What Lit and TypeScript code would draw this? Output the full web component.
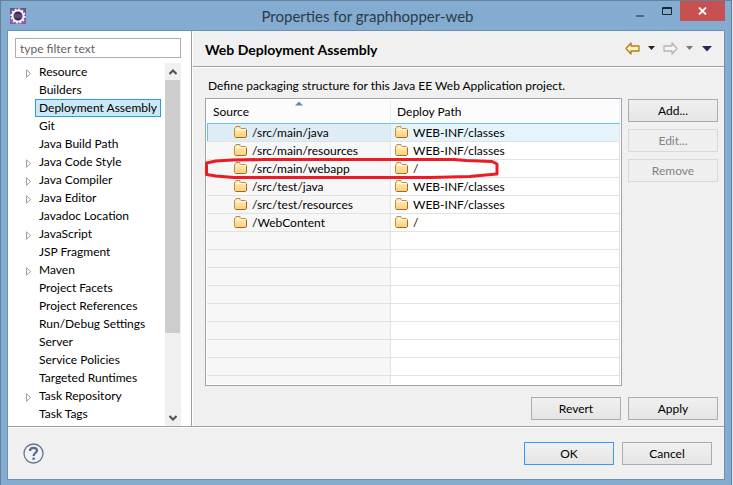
import { LitElement, html, css, nothing } from "lit";
import { customElement, state } from "lit/decorators.js";
import { classMap } from "lit/directives/class-map.js";

interface Page {
  name: string;
  expandable?: boolean;
}

interface Mapping {
  source: string;
  path: string;
}

const PAGES: Page[] = [
  { name: "Resource", expandable: true },
  { name: "Builders" },
  { name: "Deployment Assembly" },
  { name: "Git" },
  { name: "Java Build Path" },
  { name: "Java Code Style", expandable: true },
  { name: "Java Compiler", expandable: true },
  { name: "Java Editor", expandable: true },
  { name: "Javadoc Location" },
  { name: "JavaScript", expandable: true },
  { name: "JSP Fragment" },
  { name: "Maven", expandable: true },
  { name: "Project Facets" },
  { name: "Project References" },
  { name: "Run/Debug Settings" },
  { name: "Server" },
  { name: "Service Policies" },
  { name: "Targeted Runtimes" },
  { name: "Task Repository", expandable: true },
  { name: "Task Tags" },
];

const MAPPINGS: Mapping[] = [
  { source: "/src/main/java", path: "WEB-INF/classes" },
  { source: "/src/main/resources", path: "WEB-INF/classes" },
  { source: "/src/main/webapp", path: "/" },
  { source: "/src/test/java", path: "WEB-INF/classes" },
  { source: "/src/test/resources", path: "WEB-INF/classes" },
  { source: "/WebContent", path: "/" },
];

const EMPTY_ROWS = 9;

const folderIcon = html`<svg class="folder" width="14" height="12" viewBox="0 0 14 12" aria-hidden="true">
  <defs>
    <linearGradient id="f" x1="0" y1="0" x2="0" y2="1">
      <stop offset="0" stop-color="#fff3cd" />
      <stop offset="1" stop-color="#fbcf73" />
    </linearGradient>
  </defs>
  <path d="M.5 10V2.500L2 1.500V.5H6V1.500L7 2.500H11.500L12.500 3.500V10.500L11.500 11.500H1.500L.5 10.500Z" fill="url(#f)" stroke="#c68a3c" />
  <path d="M1.500 3.500H11.500" stroke="#fffbe9" />
  <path d="M1.500 11.500H11.500L12.500 10.500V4" fill="none" stroke="#a8691f" />
</svg>`;

const eclipseIcon = html`<svg width="16" height="16" viewBox="0 0 16 16" aria-hidden="true">
  <rect width="16" height="16" fill="#69508f" />
  <rect y="11" width="16" height="5" fill="#8b5da0" />
  <circle cx="8" cy="8" r="6.700" fill="none" stroke="#eeeaf0" stroke-width="2" stroke-dasharray="2 1.500" />
  <circle cx="8" cy="8" r="5.500" fill="#352a58" stroke="#f4f2f4" stroke-width="2" />
  <path d="M4 7H12M4 9H12" stroke="#7d6a9e" />
</svg>`;

const caret = (color: string) => html`<svg width="9" height="5" viewBox="0 0 9 5" aria-hidden="true">
  <path d="M1 0H8L4.500 4Z" fill=${color} />
</svg>`;

const arrow = (line: string, fill: string, forward = false) => html`<svg width="15" height="13" viewBox="0 0 15 13" aria-hidden="true">
  <path
    d=${forward
      ? "M14 6.500L9 1V4H1V9H9V12Z"
      : "M1 6.500L6 1V4H14V9H6V12Z"}
    fill=${fill} stroke=${line} stroke-width="1.300" stroke-linejoin="round" />
</svg>`;

@customElement("app-root")
export class AppRoot extends LitElement {
  @state() private selected = "Deployment Assembly";

  static styles = css`
    :host {
      display: block;
      box-sizing: border-box;
      min-height: 100vh;
      padding-right: 1px;
      background: #e4e4e6;
      font: 12px/18px Lato, "Open Sans", sans-serif;
      color: #000;
    }
    * { box-sizing: border-box; }
    button, input { font: inherit; color: inherit; margin: 0; }
    button { padding: 0; }
    svg { display: block; flex: none; }

    .window {
      display: flex;
      flex-direction: column;
      min-height: 100vh;
      padding: 0 6px 5px;
      background: #84acd0;
      border: 1px solid #638199;
      border-bottom: 0;
    }
    .titlebar {
      display: grid;
      grid-template-columns: 1fr auto 1fr;
      height: 29px;
      padding-left: 3px;
    }
    .app-icon { align-self: center; }
    .title {
      margin: 0;
      align-self: center;
      font-size: 15px;
      font-weight: 400;
      line-height: 20px;
      color: #2b3a48;
    }
    .controls { display: flex; justify-content: flex-end; align-items: flex-start; }
    .control {
      display: grid;
      place-items: center;
      width: 27px;
      height: 20px;
      border: 0;
      background: none;
    }
    .close { width: 45px; background: #c75050; }

    .client {
      flex: 1;
      display: flex;
      flex-direction: column;
      background: #f0f0f0;
      border: 1px solid #6b90b3;
    }
    .main { flex: 1; display: flex; min-height: 0; }

    .nav {
      flex: none;
      width: 184px;
      display: flex;
      flex-direction: column;
      gap: 5px;
      padding: 7px 10px 0 7px;
      background: #fff;
      border-right: 1px solid #a0a0a0;
    }
    .filter {
      width: 100%;
      height: 20px;
      padding: 0 4px;
      border: 1px solid #abadb3;
      border-radius: 0;
      background: #fff;
    }
    .filter::placeholder { color: #5f5f5f; opacity: 1; }
    .tree-area { flex: 1; display: flex; }
    .tree { flex: 1; min-width: 0; margin: 0; padding: 0; list-style: none; }
    .node { display: flex; height: 18px; }
    .twisty { width: 20px; padding: 6px 0 0 11px; flex: none; }
    .page {
      height: 18px;
      padding: 0 3px;
      border: 1px solid transparent;
      background: none;
      line-height: 16px;
      white-space: nowrap;
    }
    .page.selected { background: #cbe8f6; border-color: #26a0da; }
    .scrollbar {
      flex: none;
      width: 16px;
      display: flex;
      flex-direction: column;
      background: #f0f0f0;
    }
    .step { display: grid; place-items: center; height: 17px; border: 0; background: none; }
    .track { flex: 1; }
    .thumb { height: 77%; margin-right: 1px; background: #cdcdcd; }

    .content { flex: 1; min-width: 0; display: flex; flex-direction: column; border-left: 1px solid #fff; }
    .heading {
      display: flex;
      align-items: center;
      justify-content: space-between;
      height: 36px;
      padding: 0 11px 0 12px;
      border-bottom: 1px solid #a0a0a0;
      box-shadow: 0 1px #fff;
    }
    .heading h2 { margin: 0; padding-top: 3px; font-size: 14px; line-height: 18px; }
    .history { display: flex; align-items: center; gap: 7px; }
    .tool { display: grid; place-items: center; border: 0; background: none; }

    .form { flex: 1; display: flex; flex-direction: column; padding: 10px 6px 6px 12px; }
    .description { margin: 0 0 3px; padding-left: 3px; }
    .columns { flex: 1; display: flex; gap: 6px; }
    .table-box {
      position: relative;
      flex: 1;
      min-width: 0;
      padding: 1px;
      border: 1px solid #a0a3aa;
      background: #fff;
    }
    .mappings { width: 100%; border-collapse: separate; border-spacing: 0; table-layout: fixed; }
    .mappings th {
      position: relative;
      height: 24px;
      padding: 0 6px;
      text-align: left;
      font-weight: 400;
      background: #fcfcfc;
      border-right: 1px solid #e3eefa;
      border-bottom: 1px solid #70c0e7;
    }
    .mappings .source { width: 184px; }
    .sort { position: absolute; top: 1px; left: 0; right: 0; margin: 0 auto; }
    .mappings td {
      height: 18px;
      padding: 0 0 0 4px;
      border-right: 1px solid #e2e2e2;
      border-bottom: 1px solid #e2e2e2;
      line-height: 17px;
    }
    .mappings td:first-child { padding-left: 27px; background: #f7f7f7; }
    .mappings .current td { background: #e5f3fb; }
    .mappings .current td:first-child { background: #deedf5; box-shadow: inset 1px 0 #70c0e7; }
    .mappings .rest td { height: 8px; border-bottom: 0; }
    .cell { display: flex; align-items: center; gap: 4px; height: 17px; }
    .folder { margin-bottom: 2px; }
    .highlight { position: absolute; left: -2px; top: 58px; pointer-events: none; }

    .actions { flex: none; width: 90px; display: flex; flex-direction: column; gap: 7px; padding-top: 1px; }
    .push {
      width: 90px;
      height: 23px;
      border: 1px solid #acacac;
      background: linear-gradient(#f0f0f0, #e5e5e5);
      line-height: 20px;
    }
    .push:disabled { border-color: #d9d9d9; background: #efefef; color: #838383; }
    .push.default { border-color: #3399ff; }
    .page-buttons { display: flex; justify-content: flex-end; gap: 7px; margin-top: 11px; }

    .footer {
      display: flex;
      align-items: center;
      gap: 8px;
      height: 53px;
      padding: 1px 12px 0 15px;
      border-top: 1px solid #a0a0a0;
      box-shadow: inset 0 1px #fff;
    }
    .help { margin-right: auto; border: 0; background: none; }
  `;

  private renderNode(page: Page) {
    const active = page.name === this.selected;
    return html`<li class="node" role="treeitem" aria-selected=${active}>
      <span class="twisty">
        ${page.expandable
          ? html`<svg width="6" height="9" viewBox="0 0 6 9" aria-hidden="true">
              <path d="M.5 .8V8.200L4.700 4.500Z" fill="#fff" stroke="#a0a0a0" />
            </svg>`
          : nothing}
      </span>
      <button
        class=${classMap({ page: true, selected: active })}
        @click=${() => (this.selected = page.name)}
      >${page.name}</button>
    </li>`;
  }

  private renderMapping(row: Mapping, index: number) {
    return html`<tr class=${classMap({ current: index === 0 })}>
      <td><span class="cell">${folderIcon}${row.source}</span></td>
      <td><span class="cell">${folderIcon}${row.path}</span></td>
    </tr>`;
  }

  render() {
    return html`<div class="window">
      <header class="titlebar">
        <span class="app-icon">${eclipseIcon}</span>
        <h1 class="title">Properties for graphhopper-web</h1>
        <div class="controls">
          <button class="control" aria-label="Minimize">
            <svg width="8" height="16" viewBox="0 0 8 16"><path d="M0 12H8V14H0Z" fill="#4f6a83" /></svg>
          </button>
          <button class="control" aria-label="Maximize">
            <svg width="10" height="8" viewBox="0 0 10 8">
              <path d="M.5 .5H9.500V7.500H.5ZM0 1.500H10" fill="none" stroke="#1c2630" />
            </svg>
          </button>
          <button class="control close" aria-label="Close">
            <svg width="9" height="8" viewBox="0 0 9 8">
              <path d="M1 .5L8 7.500M8 .5L1 7.500" stroke="#fff" stroke-width="1.800" />
            </svg>
          </button>
        </div>
      </header>

      <div class="client">
        <div class="main">
          <nav class="nav">
            <input class="filter" type="text" placeholder="type filter text" aria-label="type filter text" />
            <div class="tree-area">
              <ul class="tree" role="tree">${PAGES.map((p) => this.renderNode(p))}</ul>
              <div class="scrollbar">
                <button class="step" aria-label="Scroll up">
                  <svg width="8" height="6" viewBox="0 0 8 6"><path d="M.5 5L4 1.500L7.500 5" fill="none" stroke="#505050" stroke-width="2" /></svg>
                </button>
                <div class="track"><div class="thumb"></div></div>
                <button class="step" aria-label="Scroll down">
                  <svg width="8" height="6" viewBox="0 0 8 6"><path d="M.5 1L4 4.500L7.500 1" fill="none" stroke="#505050" stroke-width="2" /></svg>
                </button>
              </div>
            </div>
          </nav>

          <section class="content">
            <div class="heading">
              <h2>Web Deployment Assembly</h2>
              <div class="history">
                <button class="tool" aria-label="Back">${arrow("#b9791a", "#fff3c4")}</button>
                <button class="tool" aria-label="Back history">${caret("#222")}</button>
                <button class="tool" aria-label="Forward">${arrow("#b4b4b4", "#f6f6f6", true)}</button>
                <button class="tool" aria-label="Forward history">${caret("#777")}</button>
                <button class="tool" aria-label="Menu">
                  <svg width="12" height="6" viewBox="0 0 12 6"><path d="M1 0H11L6 5.500Z" fill="#38204f" /></svg>
                </button>
              </div>
            </div>

            <div class="form">
              <p class="description">Define packaging structure for this Java EE Web Application project.</p>
              <div class="columns">
                <div class="table-box">
                  <table class="mappings">
                    <thead>
                      <tr>
                        <th class="source" scope="col">Source
                          <svg class="sort" width="8" height="5" viewBox="0 0 8 5" aria-hidden="true"><path d="M0 4.500L4 .5L8 4.500Z" fill="#5c8fae" /></svg>
                        </th>
                        <th scope="col">Deploy Path</th>
                      </tr>
                    </thead>
                    <tbody>
                      ${MAPPINGS.map((m, i) => this.renderMapping(m, i))}
                      ${Array.from({ length: EMPTY_ROWS }, (_, i) => html`<tr class=${classMap({ rest: i === EMPTY_ROWS - 1 })}><td></td><td></td></tr>`)}
                    </tbody>
                  </table>
                  <svg class="highlight" width="296" height="24" viewBox="0 0 296 24" aria-hidden="true">
                    <path
                      d="M60 2.500L28 3L12 4L2.500 6V17.500L12 19L30 20.500H226L246 20L266 19.500L276 18.500L293 17V7L288 4.500L262 3.500L250 2.500Z"
                      fill="none" stroke="#ed1c24" stroke-width="3" stroke-linejoin="round" />
                  </svg>
                </div>
                <div class="actions">
                  <button class="push">Add...</button>
                  <button class="push" disabled>Edit...</button>
                  <button class="push" disabled>Remove</button>
                </div>
              </div>
              <div class="page-buttons">
                <button class="push">Revert</button>
                <button class="push">Apply</button>
              </div>
            </div>
          </section>
        </div>

        <footer class="footer">
          <button class="help" aria-label="Help">
            <svg width="21" height="21" viewBox="0 0 21 21">
              <circle cx="10.500" cy="10.500" r="9.500" fill="#f0f2f6" stroke="#66748f" stroke-width="1.300" />
              <path d="M7 8Q7 4.800 10.500 4.800Q14 4.800 14 7.600Q14 9 12.200 10.200Q10.600 11.300 10.600 13" fill="none" stroke="#5a6a8c" stroke-width="2.200" />
              <rect x="9.400" y="14.600" width="2.400" height="2.200" fill="#5a6a8c" />
            </svg>
          </button>
          <button class="push default">OK</button>
          <button class="push">Cancel</button>
        </footer>
      </div>
    </div>`;
  }
}
